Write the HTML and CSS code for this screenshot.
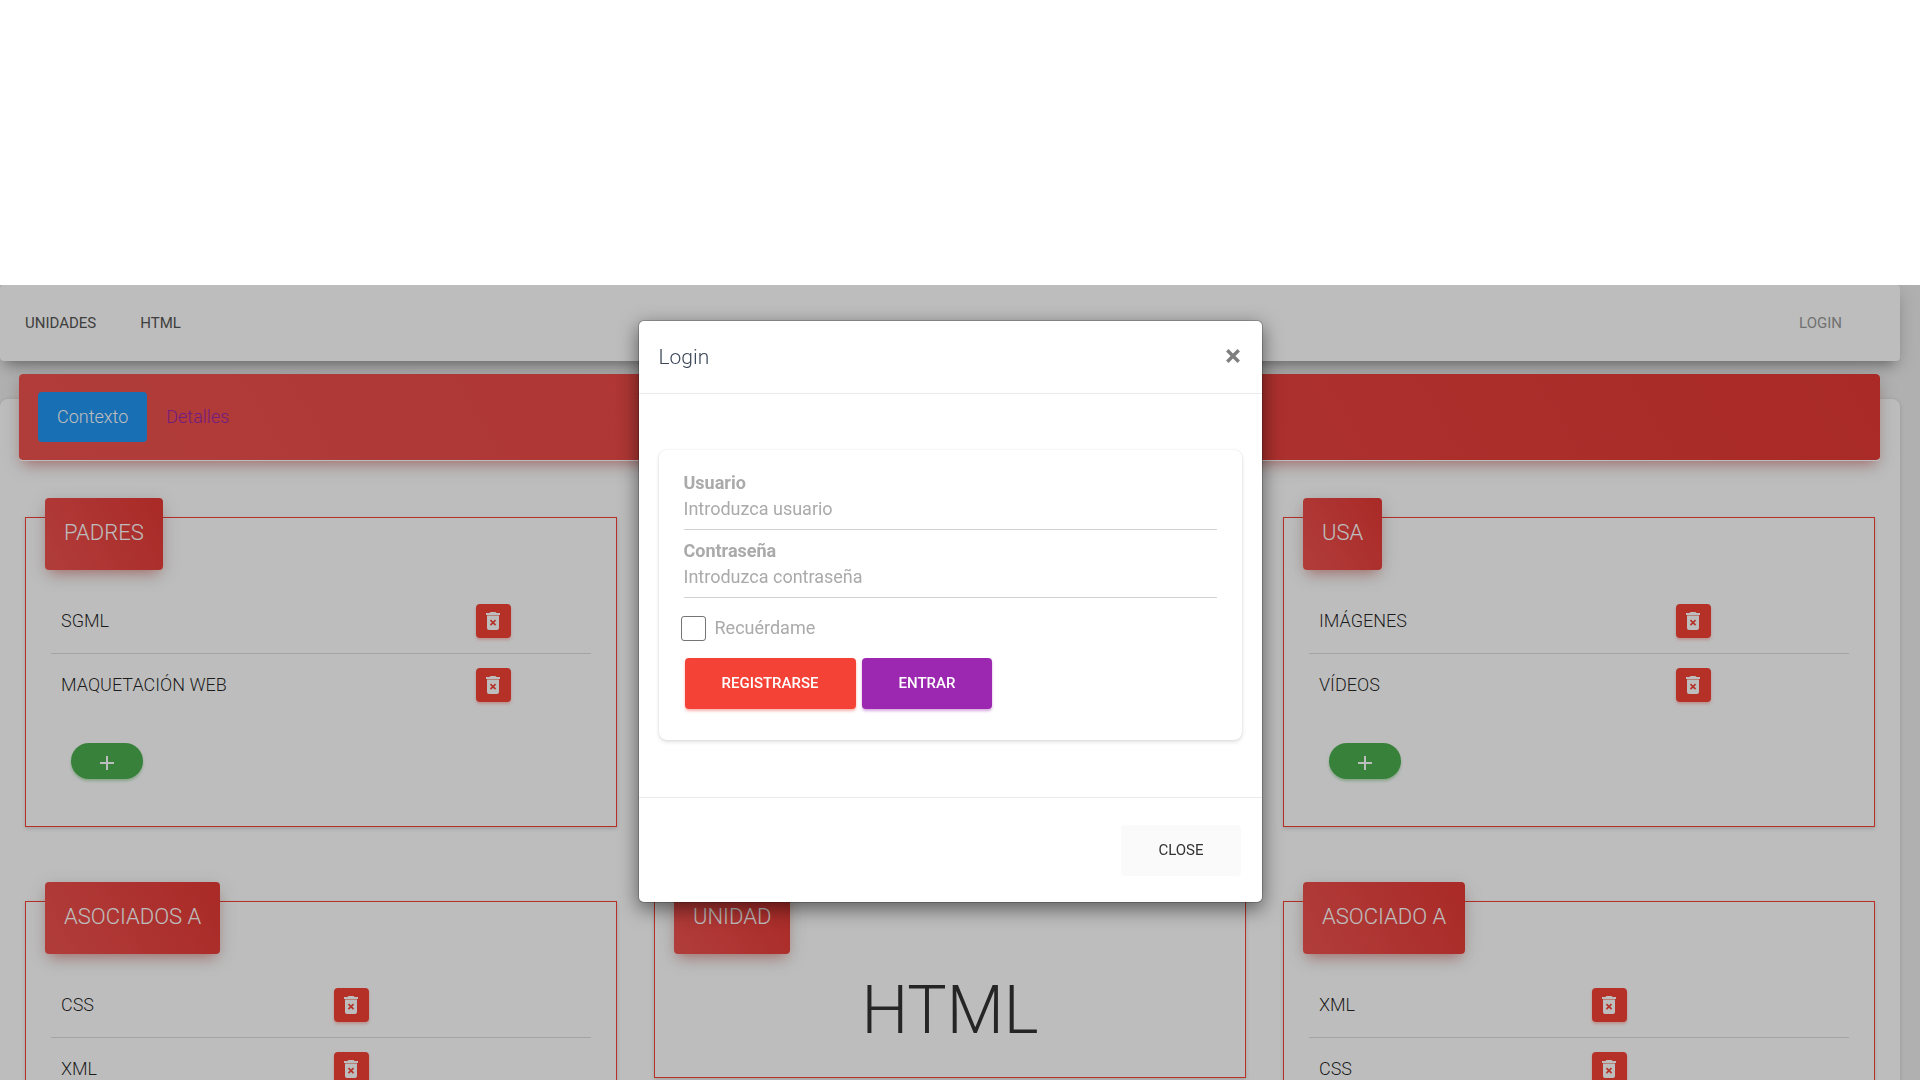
FILE: index.html
```html
<!DOCTYPE html>
<html lang="es">
<head>
<meta charset="utf-8">
<meta name="viewport" content="width=device-width, initial-scale=1">
<title>Unidades - HTML</title>
<link rel="stylesheet" href="styles.css">
</head>
<body>
<svg class="sprite" aria-hidden="true">
  <symbol id="delete" viewBox="0 0 24 24"><path d="M6 19c0 1.100.9 2 2 2h8c1.100 0 2-.9 2-2V7H6v12zm2.900-7.300l1.200-1.200L12 12.400l1.900-1.900 1.200 1.200-1.900 1.900 1.900 1.900-1.200 1.200-1.900-1.900-1.900 1.900-1.200-1.200 1.900-1.900zM15.500 4l-1-1h-5l-1 1H5v2h14V4z" fill="currentColor" fill-rule="evenodd"/><path d="M6 6h12v1H6z" fill="currentColor" fill-opacity=".55"/></symbol>
  <symbol id="add" viewBox="0 0 24 24"><path d="M19 13h-6v6h-2v-6H5v-2h6V5h2v6h6v2z" fill="currentColor"/></symbol>
  <symbol id="close" viewBox="0 0 14 14"><path d="M2 2l10 10M12 2L2 12" stroke="currentColor" stroke-width="3" fill="none"/></symbol>
</svg>

<header class="banner"></header>

<div class="page">
  <nav class="navbar">
    <a class="nav-link" href="#">Unidades</a>
    <a class="nav-link" href="#">HTML</a>
    <a class="nav-link nav-login" href="#">Login</a>
  </nav>

  <main class="main">
    <nav class="tabs">
      <a class="tab tab-active" href="#">Contexto</a>
      <a class="tab" href="#">Detalles</a>
    </nav>

    <div class="cards">
      <section class="card">
        <h4 class="card-title">PADRES</h4>
        <table class="list">
          <tr><td>SGML</td><td><button class="btn-delete" aria-label="Borrar SGML"><svg class="icon"><use href="#delete"/></svg></button></td></tr>
          <tr><td>MAQUETACIÓN WEB</td><td><button class="btn-delete" aria-label="Borrar Maquetación web"><svg class="icon"><use href="#delete"/></svg></button></td></tr>
        </table>
        <button class="btn-add" aria-label="Añadir padre"><svg class="icon"><use href="#add"/></svg></button>
      </section>

      <section class="card card-right">
        <h4 class="card-title">USA</h4>
        <table class="list">
          <tr><td>IMÁGENES</td><td><button class="btn-delete" aria-label="Borrar Imágenes"><svg class="icon"><use href="#delete"/></svg></button></td></tr>
          <tr><td>VÍDEOS</td><td><button class="btn-delete" aria-label="Borrar Vídeos"><svg class="icon"><use href="#delete"/></svg></button></td></tr>
        </table>
        <button class="btn-add" aria-label="Añadir uso"><svg class="icon"><use href="#add"/></svg></button>
      </section>

      <section class="card">
        <h4 class="card-title">ASOCIADOS A</h4>
        <table class="list">
          <tr><td>CSS</td><td><button class="btn-delete" aria-label="Borrar CSS"><svg class="icon"><use href="#delete"/></svg></button></td></tr>
          <tr><td>XML</td><td><button class="btn-delete" aria-label="Borrar XML"><svg class="icon"><use href="#delete"/></svg></button></td></tr>
        </table>
        <button class="btn-add" aria-label="Añadir asociado"><svg class="icon"><use href="#add"/></svg></button>
      </section>

      <section class="card card-unit">
        <h4 class="card-title">UNIDAD</h4>
        <h1 class="unit-name">HTML</h1>
      </section>

      <section class="card">
        <h4 class="card-title">ASOCIADO A</h4>
        <table class="list">
          <tr><td>XML</td><td><button class="btn-delete" aria-label="Borrar XML"><svg class="icon"><use href="#delete"/></svg></button></td></tr>
          <tr><td>CSS</td><td><button class="btn-delete" aria-label="Borrar CSS"><svg class="icon"><use href="#delete"/></svg></button></td></tr>
        </table>
        <button class="btn-add" aria-label="Añadir asociación"><svg class="icon"><use href="#add"/></svg></button>
      </section>
    </div>
  </main>
</div>

<div class="backdrop"></div>

<div class="modal" role="dialog" aria-modal="true" aria-labelledby="login-title">
  <div class="dialog">
    <div class="dialog-header">
      <h5 class="dialog-title" id="login-title">Login</h5>
      <button class="dialog-x" aria-label="Cerrar"><svg class="icon-x"><use href="#close"/></svg></button>
    </div>
    <div class="dialog-body">
      <form class="login">
        <label class="label" for="user">Usuario</label>
        <input class="input" id="user" type="text" placeholder="Introduzca usuario">
        <label class="label" for="pass">Contraseña</label>
        <input class="input" id="pass" type="password" placeholder="Introduzca contraseña">
        <div class="remember">
          <input class="check" id="remember" type="checkbox">
          <label for="remember">Recuérdame</label>
        </div>
        <div class="actions">
          <button class="btn btn-danger" type="button">Registrarse</button>
          <button class="btn btn-primary" type="submit">Entrar</button>
        </div>
      </form>
    </div>
    <div class="dialog-footer">
      <button class="btn btn-light" type="button">Close</button>
    </div>
  </div>
</div>
</body>
</html>
```
FILE: styles.css
```css
* {
  box-sizing: border-box;
}

body {
  margin: 0;
  height: 100vh;
  overflow: hidden;
  background: #eee;
  color: rgba(0, 0, 0, .87);
  font-family: Roboto, "Liberation Sans", sans-serif;
  font-size: 18px;
  font-weight: 300;
  line-height: 26px;
}

a {
  text-decoration: none;
}

button,
input {
  font-family: inherit;
}

.sprite {
  display: none;
}

/* Blank strip that stays above the backdrop */
.banner {
  position: relative;
  z-index: 2;
  height: 285px;
  background: #fff;
}

.page {
  padding-right: 20px;
}

.navbar {
  display: flex;
  align-items: center;
  gap: 44px;
  height: 76px;
  padding: 0 58px 0 25px;
  border-radius: 4px;
  background: #fff;
  box-shadow: 0 4px 22px 0 rgba(0, 0, 0, .12), 0 9px 12px -6px rgba(0, 0, 0, .35);
}

.nav-link {
  color: #555;
  font-size: 15px;
  font-weight: 400;
  text-transform: uppercase;
}

.nav-login {
  margin-left: auto;
  color: #999;
}

.main {
  margin-top: 38px;
  border-radius: 8px;
  background: #fff;
  box-shadow: 0 1px 5px rgba(0, 0, 0, .14);
}

.tabs {
  position: relative;
  top: -25px;
  display: flex;
  margin: 0 20px 0 19px;
  padding: 18px 19px;
  border-bottom: 1px solid #fff;
  border-radius: 4px;
  background: linear-gradient(60deg, #ef5350, #e53935) padding-box;
  box-shadow: 0 5px 20px 0 rgba(0, 0, 0, .14), 0 7px 12px -5px rgba(244, 67, 54, .46);
}

.tab {
  padding: 12px 19px;
  border-radius: 4px;
  color: #9c27b0;
}

.tab-active {
  background: #2196f3;
  color: #fff;
}

.cards {
  display: grid;
  grid-template-columns: repeat(3, 1fr);
  align-items: start;
  gap: 74px 37px;
  padding: 31px 25px;
}

.card {
  padding: 0 25px 47px;
  border: 1px solid #f44336;
  background: #fff;
  box-shadow: 0 2px 4px rgba(0, 0, 0, .14);
}

.card-right {
  grid-column: 3;
}

.card-unit {
  padding-bottom: 28px;
}

.card-title {
  width: fit-content;
  height: 72px;
  margin: -20px 0 19px -6px;
  padding: 19px;
  border-radius: 4px;
  background: linear-gradient(60deg, #ef5350, #e53935);
  box-shadow: 0 5px 20px 0 rgba(0, 0, 0, .14), 0 7px 12px -5px rgba(244, 67, 54, .46);
  color: #fff;
  font-size: 22px;
  font-weight: 300;
  line-height: 32px;
}

.list {
  width: 100%;
  border-collapse: collapse;
}

.list td {
  height: 64px;
  padding: 0 11px 0 10px;
  vertical-align: middle;
}

.list tr + tr td {
  border-top: 1px solid rgba(0, 0, 0, .13);
}

.icon {
  display: block;
  width: 24px;
  height: 24px;
}

.btn-delete {
  display: block;
  width: 35px;
  padding: 5px;
  border: 0;
  border-radius: 4px;
  background: #f44336;
  box-shadow: 0 2px 3px rgba(244, 67, 54, .3);
  color: #fff;
}

.btn-add {
  display: block;
  margin: 26px 0 0 20px;
  padding: 8px 24px 4px;
  border: 0;
  border-radius: 18px;
  background: #4caf50;
  box-shadow: 0 2px 3px rgba(76, 175, 80, .4);
  color: #fff;
}

.unit-name {
  margin: 0;
  color: #333;
  font-size: 66px;
  font-weight: 300;
  line-height: 76px;
  text-align: center;
}

.backdrop {
  position: fixed;
  inset: 0;
  z-index: 1;
  background: rgba(0, 0, 0, .26);
}

.modal {
  position: fixed;
  inset: 0;
  z-index: 3;
  padding: 320px 20px 0 0;
}

.dialog {
  max-width: 625px;
  margin: 0 auto;
  border: 1px solid rgba(0, 0, 0, .2);
  border-radius: 6px;
  background: #fff;
  background-clip: padding-box;
  box-shadow: 0 6px 19px rgba(0, 0, 0, .5);
}

.dialog-header {
  display: flex;
  align-items: flex-start;
  justify-content: space-between;
  padding: 20px;
  border-bottom: 1px solid #e9ecef;
}

.dialog-title {
  margin: 0;
  color: #3c4858;
  font-size: 21px;
  font-weight: 300;
  line-height: 32px;
}

.dialog-x {
  padding: 7px 1px;
  border: 0;
  background: none;
  color: #7f7f7f;
}

.icon-x {
  display: block;
  width: 16px;
  height: 16px;
}

.dialog-body {
  padding: 56px 20px 57px;
}

.login {
  display: flex;
  flex-direction: column;
  padding: 20px 25px 31px;
  border-radius: 8px;
  box-shadow: 0 2px 4px rgba(0, 0, 0, .12), 0 0 2px rgba(0, 0, 0, .1);
  color: #aaa;
  font-weight: 400;
}

.label {
  font-weight: 700;
}

.input {
  height: 34px;
  margin-bottom: 8px;
  padding: 0 0 8px;
  border: 0;
  border-bottom: 1px solid #d2d2d2;
  background: none;
  font-size: 18px;
}

.input::placeholder {
  color: #aaa;
}

.remember {
  display: flex;
  align-items: center;
  gap: 9px;
  margin: 9px 0 17px -3px;
}

.check {
  appearance: none;
  width: 25px;
  height: 25px;
  margin: 0;
  border: 1px solid rgba(0, 0, 0, .54);
  border-radius: 3px;
}

.actions {
  display: flex;
  gap: 6px;
  padding-left: 1px;
}

.btn {
  height: 51px;
  padding: 0 37px 2px;
  border: 0;
  border-radius: 4px;
  color: #fff;
  font-size: 15px;
  font-weight: 500;
  text-transform: uppercase;
}

.btn-danger {
  background: #f44336;
  box-shadow: 0 2px 3px rgba(244, 67, 54, .4);
}

.btn-primary {
  background: #9c27b0;
  box-shadow: 0 2px 3px rgba(156, 39, 176, .4);
}

.btn-light {
  background: #fafafa;
  color: #333;
  font-weight: 400;
}

.dialog-footer {
  display: flex;
  justify-content: flex-end;
  padding: 27px 21px 26px;
  border-top: 1px solid #e9ecef;
}
```
